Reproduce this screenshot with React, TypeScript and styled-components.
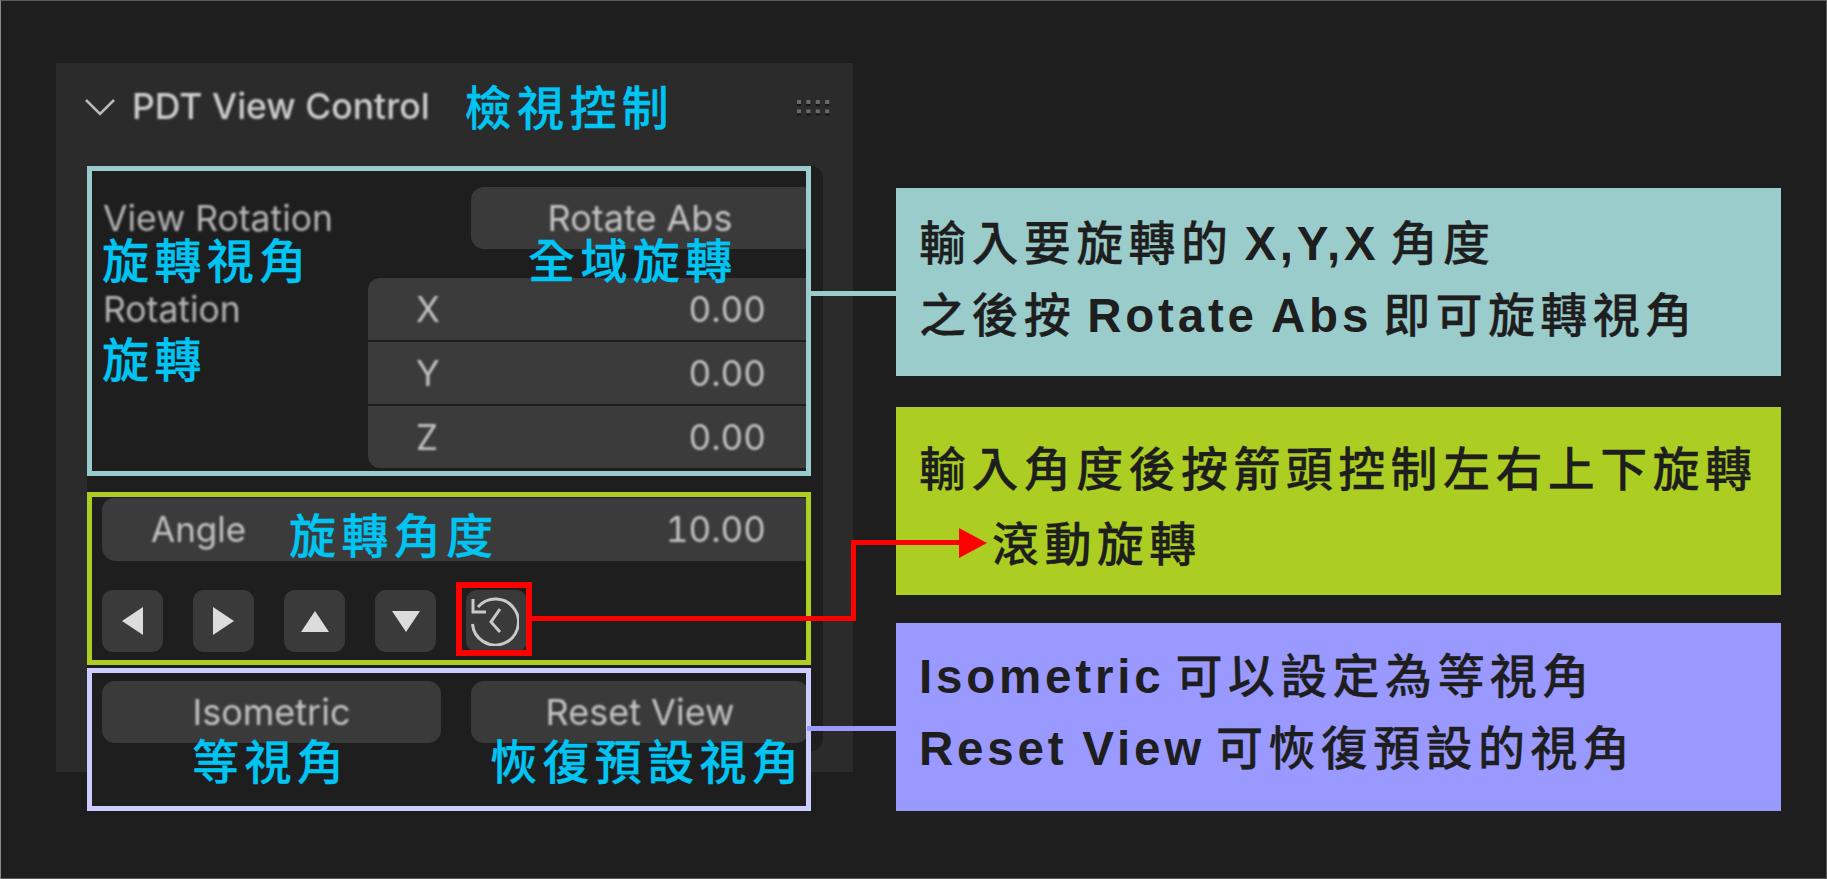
import React from 'react';
import styled, { createGlobalStyle } from 'styled-components';

const CJK = '"Noto Sans CJK TC", "Noto Sans CJK SC", sans-serif';

const GlobalStyle = createGlobalStyle`
  html, body { margin: 0; padding: 0; background: #1e1e1e; }
  * { box-sizing: border-box; }
`;

const Page = styled.div`
  position: relative;
  display: flex;
  align-items: flex-start;
  width: 1827px;
  height: 879px;
  padding: 62px 0 0 56px;
  overflow: hidden;
  background: #1e1e1e;
  border: 1px solid #5c5c5c;
  border-left-color: #8a8a8a;
  font-family: Inter, "Liberation Sans", ${CJK};
`;

const Panel = styled.section`
  flex: none;
  width: 797px;
  height: 709px;
  margin-left: -1px;
  background: #2b2b2b;
`;

const Header = styled.header`
  display: flex;
  align-items: center;
  height: 88px;
  margin-bottom: 19px;
  padding: 0 23px 0 29px;
`;

const PanelTitle = styled.span`
  margin: 0 35px 0 17px;
  font-size: 35.5px;
  font-weight: 500;
  line-height: 1;
  color: #cfcfcf;
  white-space: nowrap;
  filter: blur(0.9px);
`;

const Grip = styled.svg`
  margin-left: auto;
  filter: blur(0.5px);
`;

const Callout = styled.span<{ $x?: number; $y?: number }>`
  ${(p) => (p.$x === undefined ? 'margin-top: -4px;' : `position: absolute; left: ${p.$x}px; top: ${p.$y}px;`)}
  z-index: 2;
  font-family: ${CJK};
  font-size: 47px;
  font-weight: 500;
  line-height: 42px;
  letter-spacing: 5.4px;
  color: #00c5f3;
  white-space: nowrap;
  -webkit-text-stroke: 0.3px #00c5f3;
`;

const SubPanel = styled.div`
  width: 736px;
  height: 585px;
  margin-left: 31px;
  background: #1e1e1e;
  border-radius: 12px;
`;

const Frame = styled.div<{ $color: string; $height: number; $top: number }>`
  position: relative;
  width: 724px;
  height: ${(p) => p.$height}px;
  margin-top: ${(p) => p.$top}px;
  overflow: hidden;
  background: #1e1e1e;
  border: 5px solid ${(p) => p.$color};
`;

const RotationFrame = styled(Frame)`
  padding: 16px 0 0 11px;
`;

const AngleFrame = styled(Frame)`
  padding: 1px 0 0 10px;
`;

const ViewFrame = styled(Frame)`
  display: flex;
  gap: 30px;
  padding: 8px 0 0 10px;
`;

const FormRow = styled.div`
  display: grid;
  grid-template-columns: 265px 448px;
  align-items: start;
`;

const FieldLabel = styled.span<{ $top: number }>`
  margin-top: ${(p) => p.$top}px;
  font-size: 35.5px;
  line-height: 1;
  color: #b5b5b5;
  white-space: nowrap;
  filter: blur(0.9px);
`;

const PushButton = styled.div<{ $width: number; $offset?: number }>`
  display: flex;
  flex: none;
  align-items: center;
  justify-content: center;
  width: ${(p) => p.$width}px;
  height: 62px;
  margin-left: ${(p) => p.$offset ?? 0}px;
  padding-right: ${(p) => (p.$width > 340 ? 7 : 0)}px;
  background: #3a3a3a;
  border-radius: 13px;
`;

const ButtonText = styled.span`
  font-size: 36px;
  line-height: 1;
  color: #c4c4c4;
  white-space: nowrap;
  filter: blur(0.9px);
`;

const FieldStack = styled.div`
  display: flex;
  flex-direction: column;
  gap: 2px;
  margin-top: 29px;
`;

const Field = styled.div<{ $inset: number; $rounded?: boolean }>`
  display: flex;
  align-items: center;
  justify-content: space-between;
  height: 62px;
  padding: 0 50px 0 ${(p) => p.$inset}px;
  background: #3b3b3b;
  border-radius: ${(p) => (p.$rounded ? '14px' : '0')};
  &:first-child { border-top-left-radius: 12px; }
  &:last-child { border-bottom-left-radius: 12px; }
`;

const AngleField = styled(Field)`
  width: 714px;
  height: 63px;
`;

const FieldValue = styled.span`
  font-size: 35px;
  font-variant-numeric: tabular-nums;
  line-height: 1;
  color: #c4c4c4;
  white-space: nowrap;
  filter: blur(0.9px);
`;

const IconRow = styled.div`
  display: flex;
  gap: 30px;
  margin-top: 29px;
`;

const IconButton = styled.div<{ $marked?: boolean }>`
  position: relative;
  display: flex;
  align-items: center;
  justify-content: center;
  width: 61px;
  height: 62px;
  background: #3a3a3a;
  border-radius: 11px;
  ${(p) =>
    p.$marked
      ? `&::after {
          content: '';
          position: absolute;
          inset: -8px -5px -4px -10px;
          border: 6px solid #ff0000;
        }`
      : ''}
  svg { filter: blur(0.7px); }
`;

const HistoryIcon = styled.svg`
  margin-right: 6px;
`;

const NoteColumn = styled.div`
  display: flex;
  flex: none;
  flex-direction: column;
  width: 885px;
  margin: 0 0 0 43px;
`;

const Note = styled.div<{ $color: string; $top: number; $shift: number; $lead?: number; $reach?: number }>`
  position: relative;
  display: flex;
  flex-direction: column;
  justify-content: center;
  height: 188px;
  margin-top: ${(p) => p.$top}px;
  padding: ${(p) => (p.$shift > 0 ? p.$shift : 0)}px 0 ${(p) => (p.$shift < 0 ? -p.$shift : 0)}px 23px;
  background: ${(p) => p.$color};
  font-family: ${CJK};
  font-size: 47px;
  font-weight: 500;
  letter-spacing: 5.4px;
  word-spacing: -5px;
  line-height: ${(p) => p.$lead ?? 68}px;
  color: #1e1e1e;
  white-space: nowrap;
  -webkit-text-stroke: 0.3px #1e1e1e;
  ${(p) =>
    p.$reach
      ? `&::before {
          content: '';
          position: absolute;
          top: 103px;
          left: -${p.$reach}px;
          width: ${p.$reach}px;
          height: 5px;
          background: ${p.$color};
        }`
      : ''}
`;

const Latin = styled.b`
  font-family: "Liberation Sans", sans-serif;
  font-size: 47.5px;
  font-weight: 700;
  letter-spacing: 3.8px;
  word-spacing: -2px;
  -webkit-text-stroke: 0;
`;

const Indented = styled.span`
  padding-left: 73px;
`;

const Leader = styled.svg`
  position: absolute;
  top: -1px;
  left: -1px;
  z-index: 3;
  pointer-events: none;
`;

const dots = [0, 1].flatMap((row) => [0, 1, 2, 3].map((col) => ({ row, col })));

export default function App() {
  return (
    <>
      <GlobalStyle />
      <Page>
        <Panel>
          <Header>
            <svg width="30" height="18" viewBox="0 0 30 18" fill="none">
              <path d="M1 2 L15 16 L29 2" stroke="#b9b9b9" strokeWidth="2.6" />
            </svg>
            <PanelTitle>PDT View Control</PanelTitle>
            <Callout>檢視控制</Callout>
            <Grip width="34" height="18" viewBox="0 0 34 18">
              {dots.map(({ row, col }) => (
                <g key={`${row}-${col}`}>
                  <rect x={1 + col * 9.4} y={2 + row * 9.4} width="4" height="4" fill="#6a6a6a" />
                  <rect x={1 + col * 9.4} y={6 + row * 9.4} width="4" height="2" fill="#161616" />
                </g>
              ))}
            </Grip>
          </Header>
          <SubPanel>
            <RotationFrame $color="#9bcccc" $height={310} $top={-4}>
              <FormRow>
                <FieldLabel $top={14}>View Rotation</FieldLabel>
                <PushButton $width={345} $offset={103}>
                  <ButtonText>Rotate Abs</ButtonText>
                </PushButton>
              </FormRow>
              <FormRow>
                <FieldLabel $top={43}>Rotation</FieldLabel>
                <FieldStack>
                  <Field $inset={48}>
                    <FieldValue>X</FieldValue>
                    <FieldValue>0.00</FieldValue>
                  </Field>
                  <Field $inset={48}>
                    <FieldValue>Y</FieldValue>
                    <FieldValue>0.00</FieldValue>
                  </Field>
                  <Field $inset={48}>
                    <FieldValue>Z</FieldValue>
                    <FieldValue>0.00</FieldValue>
                  </Field>
                </FieldStack>
              </FormRow>
              <Callout $x={10} $y={66}>旋轉視角</Callout>
              <Callout $x={436} $y={66}>全域旋轉</Callout>
              <Callout $x={10} $y={165}>旋轉</Callout>
            </RotationFrame>

            <AngleFrame $color="#acce22" $height={173} $top={16}>
              <AngleField $inset={49} $rounded>
                <FieldValue>Angle</FieldValue>
                <FieldValue>10.00</FieldValue>
              </AngleField>
              <IconRow>
                <IconButton>
                  <svg width="23" height="30" viewBox="0 0 23 30">
                    <path d="M22 1 V29 L1 15 Z" fill="#dcdcdc" />
                  </svg>
                </IconButton>
                <IconButton>
                  <svg width="23" height="30" viewBox="0 0 23 30">
                    <path d="M1 1 V29 L22 15 Z" fill="#dcdcdc" />
                  </svg>
                </IconButton>
                <IconButton>
                  <svg width="30" height="23" viewBox="0 0 30 23">
                    <path d="M1 22 H29 L15 1 Z" fill="#dcdcdc" />
                  </svg>
                </IconButton>
                <IconButton>
                  <svg width="30" height="23" viewBox="0 0 30 23">
                    <path d="M1 1 H29 L15 22 Z" fill="#dcdcdc" />
                  </svg>
                </IconButton>
                <IconButton $marked>
                  <HistoryIcon width="50" height="50" viewBox="0 0 50 50" fill="none" stroke="#c9c9c9" strokeWidth="3">
                    <path d="M9 11 A23 23 0 1 1 3.5 28" />
                    <path d="M4 3 V16 H17" />
                    <path d="M31 13 L22 26 L31 36" />
                  </HistoryIcon>
                </IconButton>
              </IconRow>
              <Callout $x={197} $y={15}>旋轉角度</Callout>
            </AngleFrame>

            <ViewFrame $color="#ccccff" $height={143} $top={3}>
              <PushButton $width={339}>
                <ButtonText>Isometric</ButtonText>
              </PushButton>
              <PushButton $width={338}>
                <ButtonText>Reset View</ButtonText>
              </PushButton>
              <Callout $x={100} $y={65}>等視角</Callout>
              <Callout $x={398} $y={65}>恢復預設視角</Callout>
            </ViewFrame>
          </SubPanel>
        </Panel>

        <NoteColumn>
          <Note $color="#9bcccc" $top={125} $shift={-9}>
            <span>輸入要旋轉的 <Latin>X,Y,X</Latin> 角度</span>
            <span>之後按 <Latin>Rotate Abs</Latin> 即可旋轉視角</span>
          </Note>
          <Note $color="#acce22" $top={31} $shift={3} $lead={75}>
            <span>輸入角度後按箭頭控制左右上下旋轉</span>
            <Indented>滾動旋轉</Indented>
          </Note>
          <Note $color="#9999ff" $top={28} $shift={-12} $reach={89}>
            <span><Latin>Isometric</Latin> 可以設定為等視角</span>
            <span><Latin>Reset View</Latin> 可恢復預設的視角</span>
          </Note>
        </NoteColumn>

        <Leader width="1827" height="879" viewBox="0 0 1827 879" fill="none">
          <path d="M531 618.5 H853.5 V542.5 H962" stroke="#ff0000" strokeWidth="5" />
          <path d="M959 528 L987 543 L959 558 Z" fill="#ff0000" />
          <path d="M811 293.5 H896" stroke="#9bcccc" strokeWidth="5" />
        </Leader>
      </Page>
    </>
  );
}
